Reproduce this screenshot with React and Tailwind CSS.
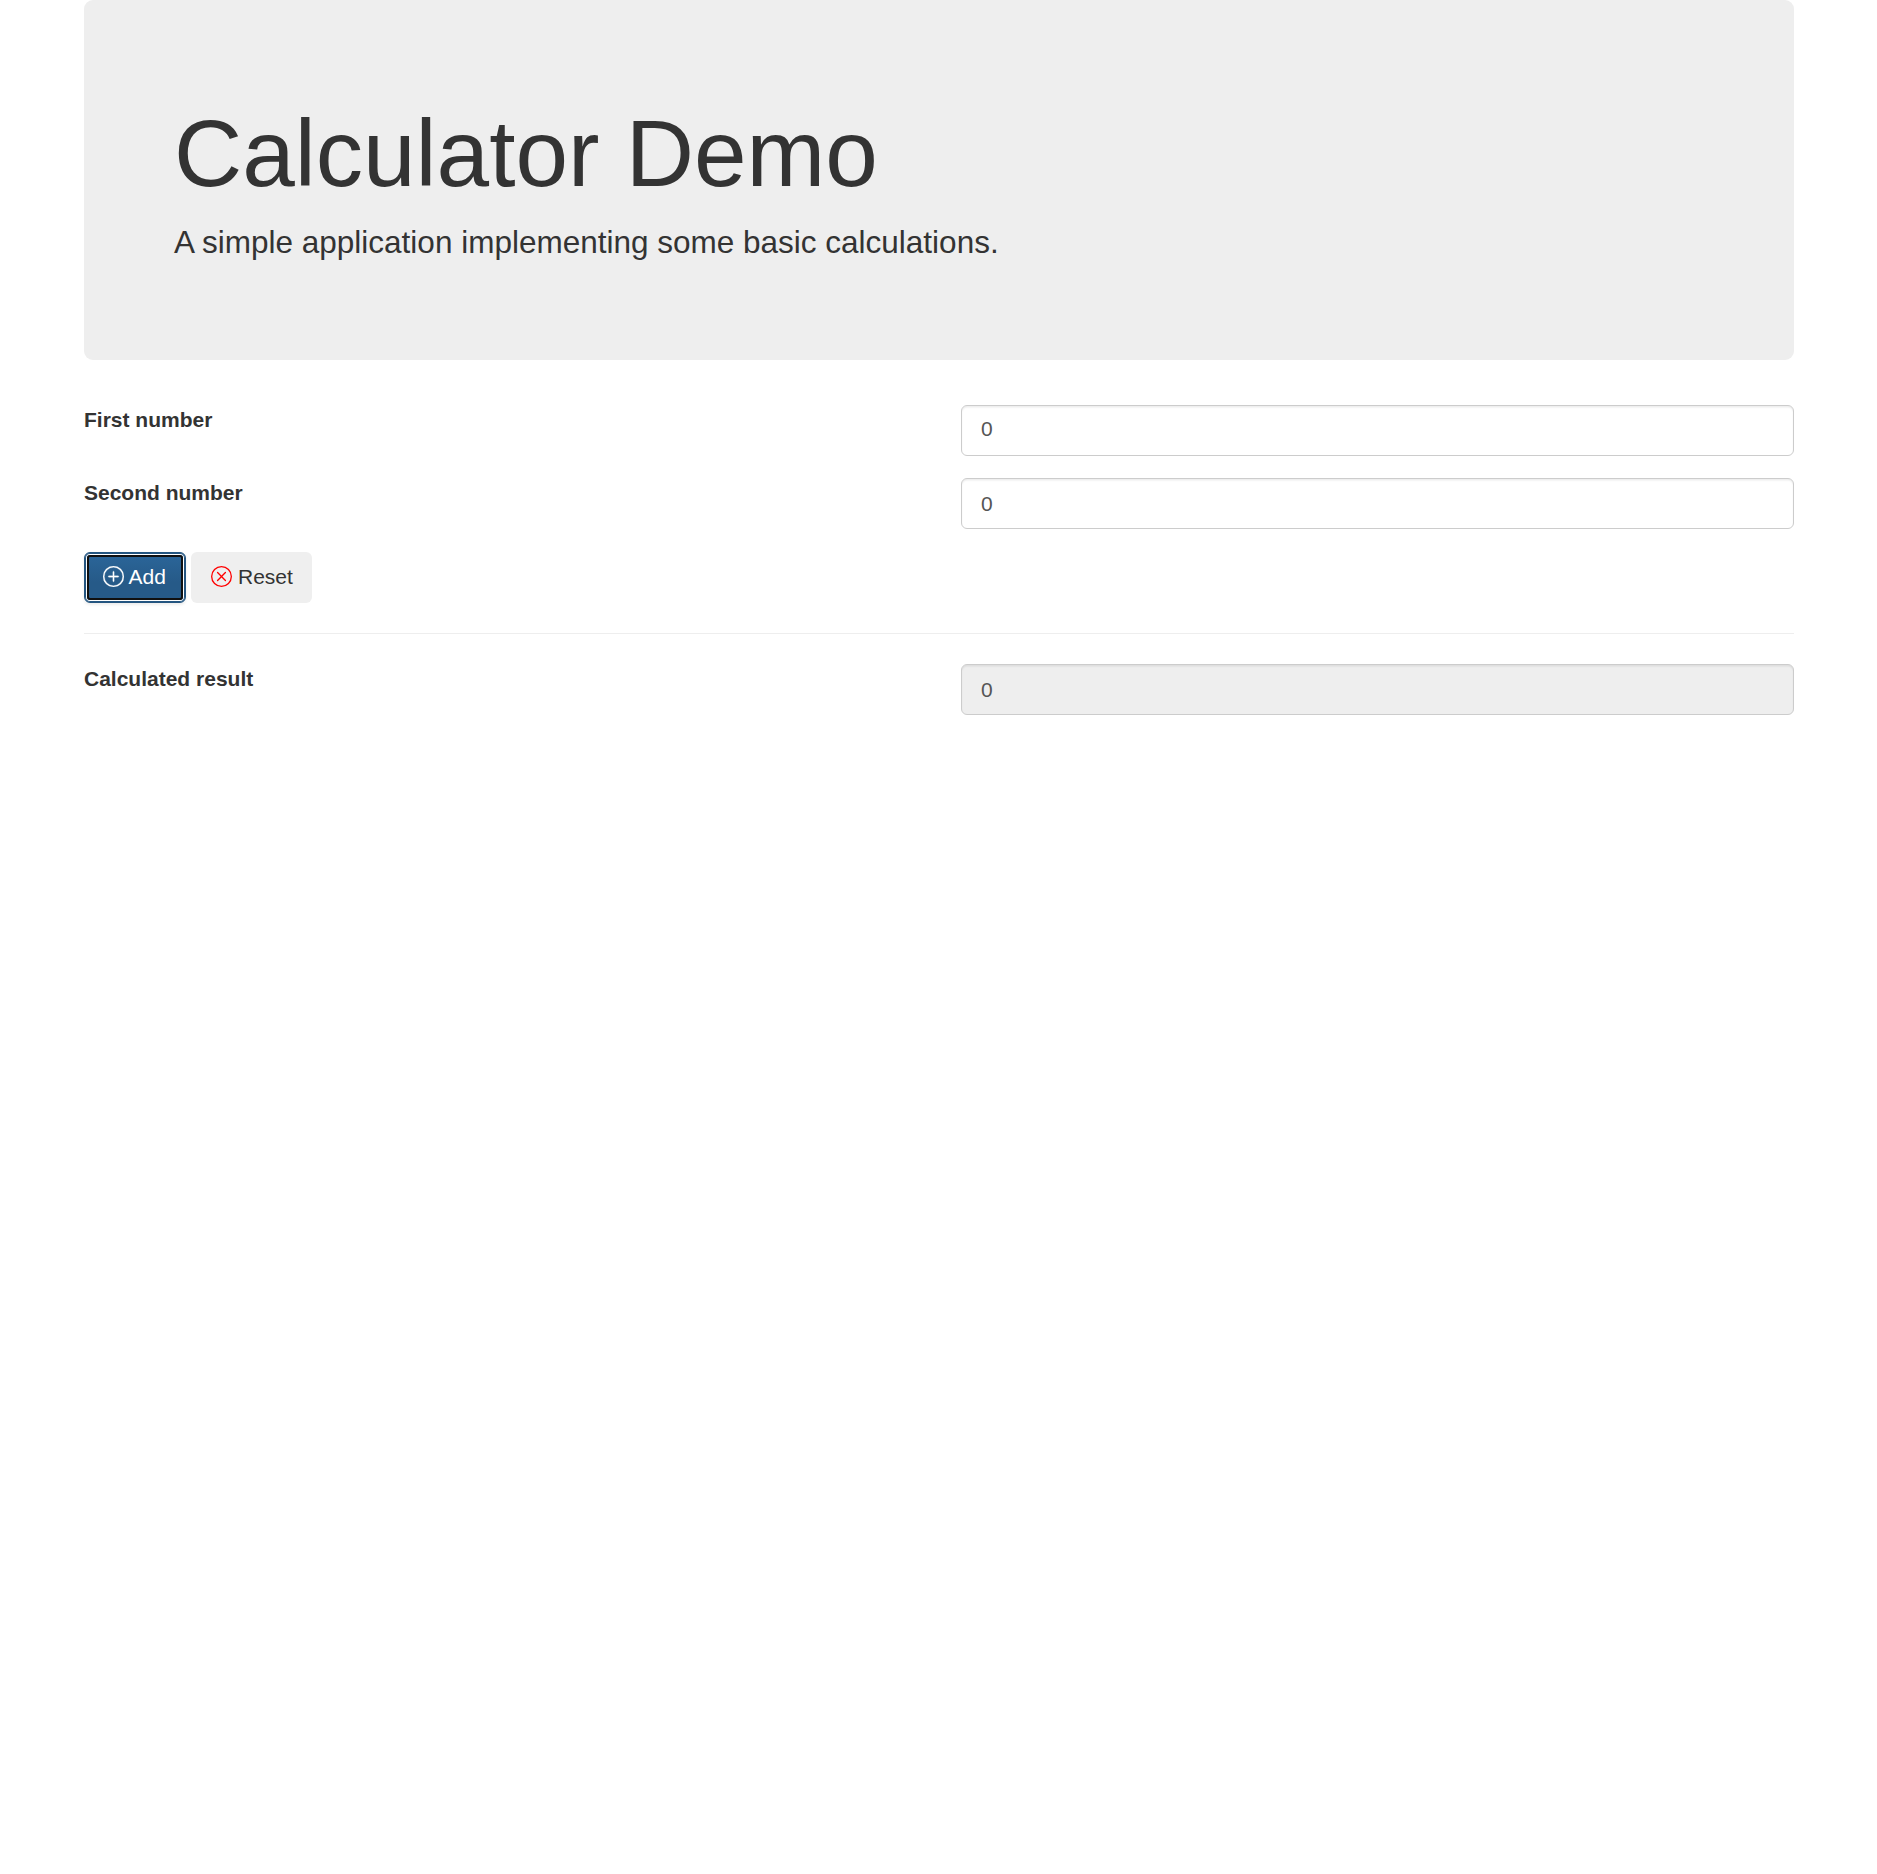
import { useState } from "react";
import { BsPlusCircle, BsXCircle } from "react-icons/bs";

const field =
  "block h-[51px] w-[833px] rounded-[6px] border border-[#ccc] pl-[19px] pr-[18px] text-[21px] leading-[30px] text-[#555] shadow-[inset_0_1.5px_1.5px_rgba(0,0,0,0.075)] outline-none";

function Row({ label, children }) {
  return (
    <div className="flex h-[51px] items-start justify-between">
      <label className="text-[21px] leading-[30px] font-bold">{label}</label>
      {children}
    </div>
  );
}

export default function App() {
  const [first, setFirst] = useState("0");
  const [second, setSecond] = useState("0");
  const [result, setResult] = useState("0");
  const reset = () => {
    setFirst("0");
    setSecond("0");
    setResult("0");
  };

  return (
    <div className="min-h-screen bg-white font-['Liberation_Sans',Arial,sans-serif] text-[21px] leading-[30px] text-[#333]">
      <main className="ml-[84px] w-[1710px]">
        <header className="h-[360px] rounded-[9px] bg-[#eee] px-[90px] pt-[106px]">
          <h1 className="text-[94.5px] leading-[94.5px] font-medium">Calculator Demo</h1>
          <p className="mt-[19px] text-[31.5px] leading-[45px] font-extralight">
            A simple application implementing some basic calculations.
          </p>
        </header>

        <section className="mt-[45px] flex flex-col gap-[22px]">
          <Row label="First number">
            <input className={field + " pt-[8px] pb-[11px]"} value={first} onChange={(e) => setFirst(e.target.value)} />
          </Row>
          <Row label="Second number">
            <input className={field + " py-[9px]"} value={second} onChange={(e) => setSecond(e.target.value)} />
          </Row>
        </section>

        <div className="mt-[23px] flex gap-[5px]">
          <button
            onClick={() => setResult(String(Number(first) + Number(second)))}
            className="flex h-[51px] w-[102px] items-center gap-[4.5px] rounded-[6px] border border-[#245580] bg-linear-to-b from-[#2b669a] to-[#265a88] to-60% pb-[2px] pl-[18px] text-white outline-2 -outline-offset-[5px] outline-[#101010] shadow-[inset_0_0_0_1px_#245580,inset_0_0_0_2px_#fff,0_1.5px_3px_rgba(0,0,0,0.075)]"
          >
            <BsPlusCircle className="size-[21px]" strokeWidth="0.2" />
            Add
          </button>
          <button
            onClick={reset}
            className="flex h-[51px] w-[121px] items-center gap-[6px] rounded-[6px] bg-[#efefef] pb-[2px] pl-[20px]"
          >
            <BsXCircle className="size-[21px] text-[#f00]" />
            Reset
          </button>
        </div>

        <hr className="mt-[30px] mb-[30px] border-t border-[#eee]" />

        <Row label="Calculated result">
          <input className={field + " bg-[#eee] py-[9px]"} value={result} readOnly />
        </Row>
      </main>
    </div>
  );
}
